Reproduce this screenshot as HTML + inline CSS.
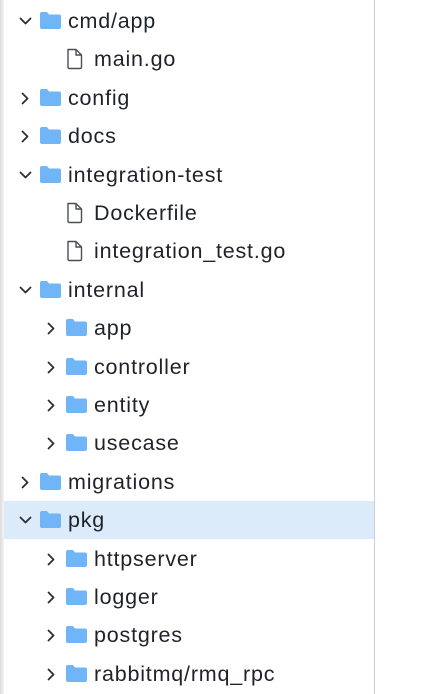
<!DOCTYPE html>
<html><head><style>
html,body{margin:0;padding:0;background:#fff;width:424px;height:694px;overflow:hidden;}
body{position:relative;font-family:"Liberation Sans",sans-serif;}
.edge{position:absolute;left:0;top:0;width:4px;height:694px;background:linear-gradient(90deg,#dcdcdc,#f4f4f4);}
.vl{position:absolute;left:374px;top:0;width:1px;height:694px;background:#c9cfd6;}
.row{position:absolute;left:4px;width:370px;height:38px;}
.sel{background:#dcebfa;}
.row span{position:absolute;top:7px;font-size:21.5px;letter-spacing:0.8px;color:#1f2329;line-height:24px;}
.row svg{position:absolute;}
</style></head><body>
<div class="edge"></div>
<div class="vl"></div>
<div id="t"></div>
<script>
var items=[["d",0,"cmd/app",1],["f",1,"main.go"],["d",0,"config",0],["d",0,"docs",0],["d",0,"integration-test",1],["f",1,"Dockerfile"],["f",1,"integration_test.go"],["d",0,"internal",1],["d",1,"app",0],["d",1,"controller",0],["d",1,"entity",0],["d",1,"usecase",0],["d",0,"migrations",0],["d",0,"pkg",1,1],["d",1,"httpserver",0],["d",1,"logger",0],["d",1,"postgres",0],["d",1,"rabbitmq/rmq_rpc",0]];
var h="";
items.forEach(function(it,i){
var top=2+i*38.4, x=it[1]*26;
h+='<div class="row'+(it[4]?' sel':'')+'" style="top:'+top+'px">';
if(it[0]=="d"){
 var ch=it[3]?'<path d="M0 0 L5 5 L10 0" />':'<path d="M0 0 L5 5 L0 10" />';
 var cx=it[3]?x+15:x+17, cy=it[3]?15:13;
 h+='<svg width="14" height="14" style="left:'+cx+'px;top:'+cy+'px"><g fill="none" stroke="#2a2f36" stroke-width="1.8" stroke-linecap="round" stroke-linejoin="round" transform="translate(1.5,1.5)">'+ch+'</g></svg>';
 h+='<svg width="23" height="19" style="left:'+(x+35)+'px;top:9px"><path d="M1 3 Q1 1 3 1 L8 1 L10 3.5 L20 3.5 Q22 3.5 22 5.5 L22 16 Q22 18 20 18 L3 18 Q1 18 1 16 Z" fill="#6fb5f8"/></svg>';
 h+='<span style="left:'+(x+64)+'px">'+it[2]+'</span>';
}else{
 h+='<svg width="18" height="22" style="left:'+(x+36)+'px;top:8px"><path d="M2 1.5 L10 1.5 L15.5 7 L15.5 19 Q15.5 20.5 14 20.5 L3.5 20.5 Q2 20.5 2 19 Z M10 1.5 L10 7 L15.5 7" fill="none" stroke="#4a4f56" stroke-width="1.4" stroke-linejoin="round"/></svg>';
 h+='<span style="left:'+(x+64)+'px">'+it[2]+'</span>';
}
h+='</div>';
});
document.getElementById("t").innerHTML=h;
</script>
</body></html>
